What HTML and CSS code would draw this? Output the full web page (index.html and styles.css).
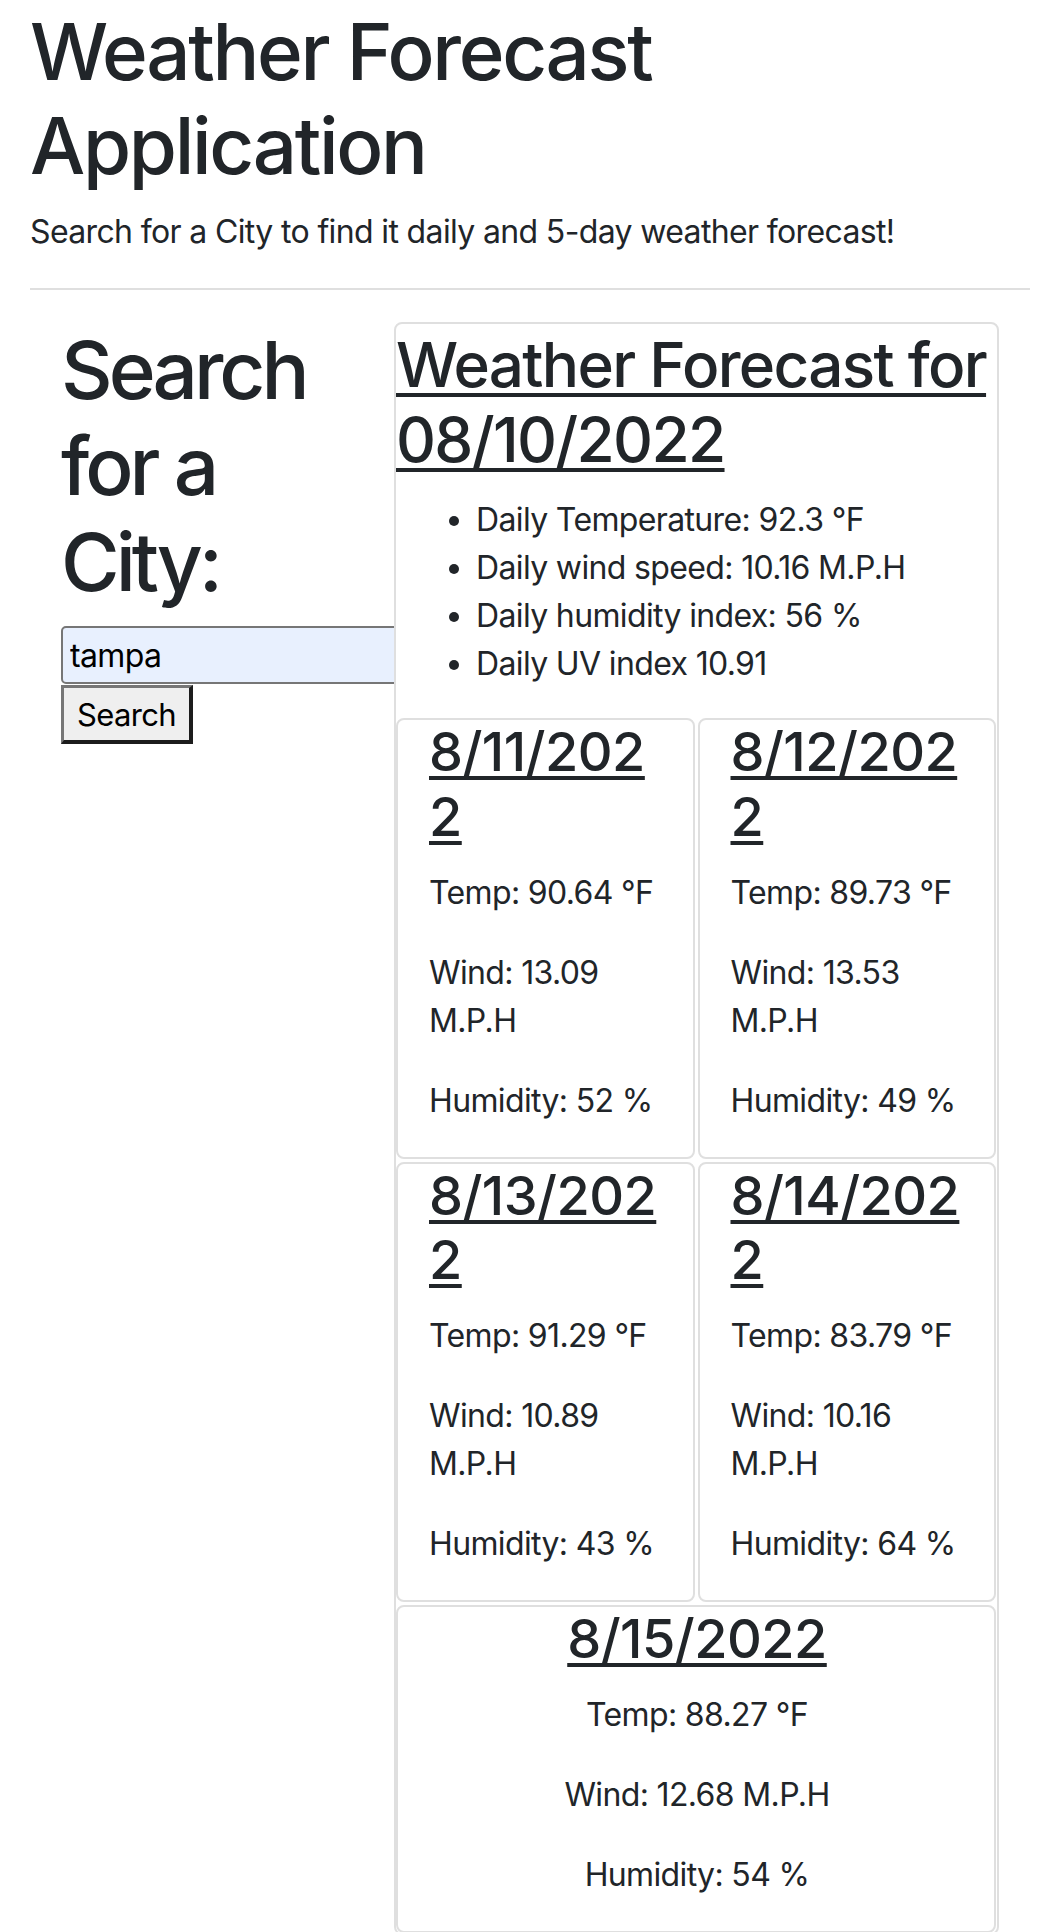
FILE: index.html
```html
<!DOCTYPE html>
<html lang="en">
<head>
<meta charset="utf-8">
<title>Weather Forecast Application</title>
<link rel="stylesheet" href="styles.css">
</head>
<body>
<div class="page">
  <header class="intro">
    <h1 class="app-title">Weather Forecast Application</h1>
    <p class="app-sub">Search for a City to find it daily and 5-day weather forecast!</p>
  </header>
  <hr class="divider">
  <div class="layout">
    <aside class="search-col">
      <h2 class="search-title">Search for a City:</h2>
      <input class="city-input" type="text" value="tampa">
      <button class="search-btn" type="button">Search</button>
    </aside>
    <section class="forecast-card">
      <h2 class="today-title">Weather Forecast for 08/10/2022</h2>
      <ul class="today-list">
        <li>Daily Temperature: 92.3 °F</li>
        <li>Daily wind speed: 10.16 M.P.H</li>
        <li>Daily humidity index: 56 %</li>
        <li>Daily UV index 10.91</li>
      </ul>
      <div class="days">
        <div class="day">
          <h3 class="day-title">8/11/2022</h3>
          <p>Temp: 90.64 °F</p>
          <p>Wind: 13.09 M.P.H</p>
          <p>Humidity: 52 %</p>
        </div>
        <div class="day">
          <h3 class="day-title">8/12/2022</h3>
          <p>Temp: 89.73 °F</p>
          <p>Wind: 13.53 M.P.H</p>
          <p>Humidity: 49 %</p>
        </div>
        <div class="day">
          <h3 class="day-title">8/13/2022</h3>
          <p>Temp: 91.29 °F</p>
          <p>Wind: 10.89 M.P.H</p>
          <p>Humidity: 43 %</p>
        </div>
        <div class="day">
          <h3 class="day-title">8/14/2022</h3>
          <p>Temp: 83.79 °F</p>
          <p>Wind: 10.16 M.P.H</p>
          <p>Humidity: 64 %</p>
        </div>
        <div class="day day-wide">
          <h3 class="day-title">8/15/2022</h3>
          <p>Temp: 88.27 °F</p>
          <p>Wind: 12.68 M.P.H</p>
          <p>Humidity: 54 %</p>
        </div>
      </div>
    </section>
  </div>
</div>
</body>
</html>
```

FILE: styles.css
```css
* { box-sizing: border-box; }

html, body {
  margin: 0;
  padding: 0;
  background: #ffffff;
}

body {
  font-family: Inter, "Liberation Sans", Arial, sans-serif;
  font-size: 32px;
  line-height: 1.5;
  color: #212529;
  letter-spacing: -0.02em;
}

.page {
  padding: 5px 30px 0 30px;
}

.app-title {
  margin: 0 0 16px 0;
  font-size: 78px;
  line-height: 1.2;
  font-weight: 500;
  letter-spacing: -0.03em;
}

.app-sub {
  margin: 0 0 32px 0;
  font-size: 32px;
}

.divider {
  margin: 0 0 32px 0;
  border: 0;
  border-top: 2px solid #dfdfdf;
  height: 0;
}

.layout {
  display: flex;
  align-items: flex-start;
}

.search-col {
  width: 364px;
  flex-shrink: 0;
  padding-left: 31px;
  overflow: hidden;
}

.search-title {
  width: 290px;
  margin: 0 0 16px 0;
  font-size: 80px;
  line-height: 1.2;
  font-weight: 500;
  letter-spacing: -0.05em;
}

.city-input {
  display: block;
  width: 400px;
  height: 58px;
  margin: 0;
  padding: 0 7px;
  font-family: Inter, "Liberation Sans", Arial, sans-serif;
  font-size: 32px;
  letter-spacing: -0.02em;
  color: #000;
  background: #e8f0fe;
  border: 2px solid #767676;
  border-radius: 5px;
}

.search-btn {
  display: block;
  width: 132px;
  height: 59px;
  margin: 1px 0 0 0;
  padding: 0 10px;
  font-family: Inter, "Liberation Sans", Arial, sans-serif;
  font-size: 31px;
  letter-spacing: -0.02em;
  color: #000;
  background: #efefef;
  border-style: solid;
  border-width: 3px 4px 4px 3px;
  border-color: #767676 #1c1c1c #1c1c1c #767676;
  text-align: center;
}

.forecast-card {
  width: 605px;
  flex-shrink: 0;
  border: 2px solid #dfdfdf;
  border-radius: 8px;
  background: #fff;
  padding: 0 1px 0 0;
}

.today-title {
  margin: 4px 0 19px 0;
  font-size: 62px;
  line-height: 1.2;
  font-weight: 500;
  text-decoration: underline;
  text-decoration-thickness: 4px;
  text-underline-offset: 6px;
  letter-spacing: -0.027em;
}

.today-list {
  margin: 0 0 30px 0;
  padding-left: 80px;
}

.days {
  display: flex;
  flex-wrap: wrap;
  gap: 3px;
}

.day {
  flex: 1 1 40%;
  border: 2px solid #dfdfdf;
  border-radius: 8px;
  padding: 0 29px 0 31px;
}

.day-wide {
  text-align: center;
}

.day-title {
  margin: 0 0 19px 0;
  font-size: 54px;
  line-height: 1.2;
  font-weight: 500;
  word-break: break-all;
  text-decoration: underline;
  text-decoration-thickness: 4px;
  text-underline-offset: 5px;
  letter-spacing: -0.01em;
}

.day p {
  margin: 0 0 32px 0;
}
```
